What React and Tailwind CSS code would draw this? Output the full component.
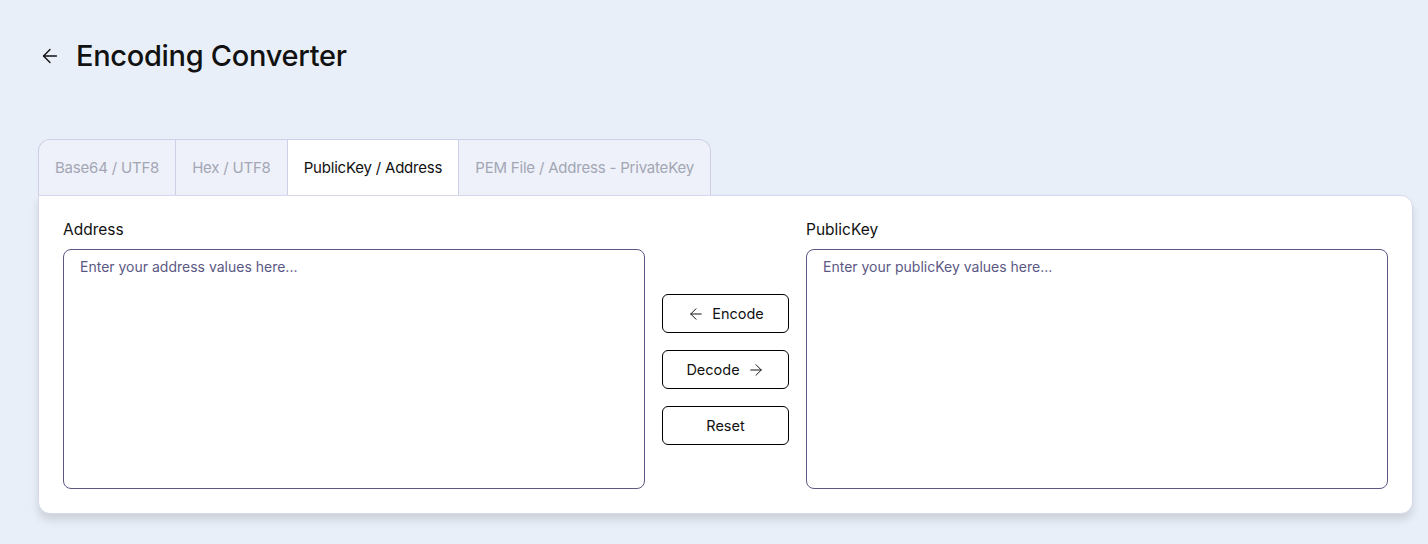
import { ArrowLeft, ArrowRight } from 'lucide-react';

const tabs = ['Base64 / UTF8', 'Hex / UTF8', 'PublicKey / Address', 'PEM File / Address - PrivateKey'];

function Field({ label, placeholder }) {
  return (
    <div className="flex-1 flex flex-col">
      <label className="text-[15.5px] text-[#111] mb-[9px] leading-[20px]">{label}</label>
      <textarea
        placeholder={placeholder}
        className="h-[240px] w-full resize-none rounded-lg border border-[#5b5884] bg-white px-4 py-[6px] text-[14px] outline-none placeholder:text-[#5b5884]"
      />
    </div>
  );
}

export default function App() {
  return (
    <div className="min-h-screen bg-[#e9eff8] pl-[38px] pr-[15px] pt-[38px] pb-[30px] font-['Inter','Noto_Sans',sans-serif] text-[#111]">
      <div className="flex items-center gap-[15px] pl-[1px] h-[36px]">
        <ArrowLeft className="h-[22px] w-[22px]" strokeWidth={1.5} />
        <h1 className="text-[29px] font-medium tracking-[-0.3px]">Encoding Converter</h1>
      </div>

      <div className="mt-[65px] flex w-fit rounded-t-xl border border-b-0 border-[#cfd0e8] bg-[#eef1f9] overflow-hidden">
        {tabs.map((t, i) => (
          <button
            key={t}
            className={`h-[55px] px-4 pt-[2px] text-[15px] tracking-[-0.2px] ${i > 0 ? 'border-l border-[#cfd0e8]' : ''} ${i === 2 ? 'bg-white text-[#111]' : 'text-[#a3a6b4]'}`}
          >
            {t}
          </button>
        ))}
      </div>

      <div className="rounded-b-xl rounded-tr-xl border border-[#d6d7ec] bg-white px-[24px] pt-[24px] pb-[24px] shadow-[0_6px_8px_rgba(0,0,0,0.12)]">
        <div className="flex items-end gap-[17px]">
          <Field label="Address" placeholder="Enter your address values here..." />
          <div className="flex h-[240px] w-[127px] flex-col justify-center gap-[17px]">
            <button className="flex h-[39px] items-center justify-center gap-[7px] rounded-md border border-black pt-[2px] text-[14.5px]">
              <ArrowLeft className="h-[18px] w-[18px]" strokeWidth={1.3} /> Encode
            </button>
            <button className="flex h-[39px] items-center justify-center gap-[7px] rounded-md border border-black pt-[2px] text-[14.5px]">
              Decode <ArrowRight className="h-[18px] w-[18px]" strokeWidth={1.3} />
            </button>
            <button className="flex h-[39px] items-center justify-center rounded-md border border-black pt-[2px] text-[14.5px]">
              Reset
            </button>
          </div>
          <Field label="PublicKey" placeholder="Enter your publicKey values here..." />
        </div>
      </div>
    </div>
  );
}
